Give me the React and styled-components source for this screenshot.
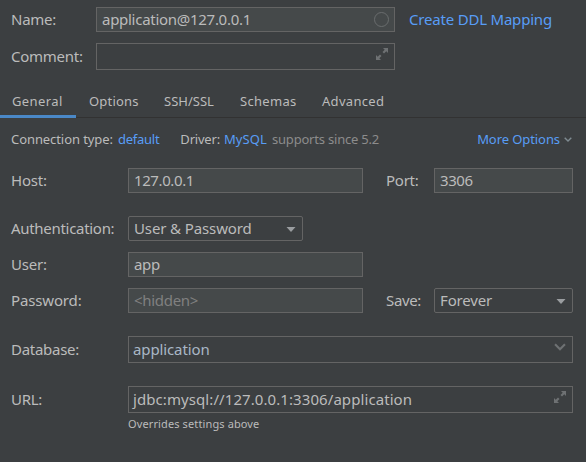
import React from "react";
import styled, { createGlobalStyle } from "styled-components";

const GlobalStyle = createGlobalStyle`
  *, *::before, *::after { box-sizing: border-box; }
  html, body { margin: 0; background: #3c3f41; }
`;

const Dialog = styled.main`
  width: 586px;
  height: 462px;
  overflow: hidden;
  background: #3c3f41;
  color: #bbbbbb;
  font: 15px/20px "Noto Sans", sans-serif;
  white-space: nowrap;
`;

const Text = styled.span`
  letter-spacing: ${(p) => p.$track || 0}px;
`;

const Header = styled.header`
  display: grid;
  grid-template-columns: 85px 299px auto;
  grid-template-rows: 25px 27px;
  row-gap: 11px;
  padding: 7px 0 0 11px;
  align-items: center;
`;

const Link = styled(Text)`
  color: #589df6;
  margin-left: ${(p) => p.$gap || 0}px;
  padding-bottom: ${(p) => p.$lift || 0}px;
`;

const Label = styled.label`
  padding: 0 0 2px ${(p) => p.$inset || 0}px;
  letter-spacing: ${(p) => p.$track || 0}px;
`;

const Field = styled.div`
  display: flex;
  align-items: center;
  justify-content: space-between;
  height: ${(p) => (p.$tall ? 27 : 25)}px;
  width: ${(p) => (p.$width ? `${p.$width}px` : "100%")};
  padding: 0 5px 0 ${(p) => (p.$tall ? 4 : 5)}px;
  border: 1px solid #646464;
  border-radius: ${(p) => (p.$select ? 2 : 0)}px;
  background: ${(p) => (p.$filled ? "#45494a" : "#3c3f41")};
  color: ${(p) => (p.$muted ? "#808080" : p.$code ? "#a9b7c6" : "#bbbbbb")};
`;

const Value = styled(Text)`
  padding-bottom: 2px;
`;

const Tabs = styled.nav`
  display: flex;
  height: 33px;
  margin-top: 15px;
  border-bottom: 1px solid #323232;
`;

const Tab = styled.span`
  height: 33px;
  width: ${(p) => p.$width}px;
  padding: 6px 0 0 ${(p) => (p.$active ? 12 : 13)}px;
  border-bottom: ${(p) => (p.$active ? "3px solid #4a88c7" : "0")};
  font-size: 13px;
  line-height: 20px;
  letter-spacing: ${(p) => p.$track || 0}px;
`;

const Summary = styled.div`
  display: flex;
  align-items: center;
  height: 18px;
  margin: 12px 14px 0 11px;
  font-size: 13px;
  line-height: 18px;
`;

const Driver = styled(Text)`
  margin-left: 21px;
`;

const Note = styled(Text)`
  margin-left: 5px;
  color: #8c8c8c;
`;

const MoreOptions = styled.span`
  display: flex;
  align-items: center;
  gap: 4px;
  margin-left: auto;
`;

const Form = styled.section`
  padding: 20px 13px 0 11px;
`;

const Row = styled.div`
  display: grid;
  grid-template-columns: 117px ${(p) => (p.$wide ? "445px" : "235px 71px 139px")};
  align-items: center;
  margin-bottom: ${(p) => p.$after}px;
`;

const Hint = styled.p`
  margin: 3px 0 0 117px;
  font-size: 11px;
  line-height: 16px;
  letter-spacing: 0.12px;
`;

const Icon = styled.svg`
  display: block;
  flex: none;
  margin-top: ${(p) => p.$raise || 0}px;
  margin-right: ${(p) => p.$right || 0}px;
`;

function ExpandIcon() {
  return (
    <Icon width="12" height="12" viewBox="0 0 12 12" $raise={-5} $right={1}>
      <path
        d="M7 0h5v5l-1.700-1.700L8 5.500 6.500 4l2.200-2.300zM0 7l1.700 1.700L4 6.500 5.500 8l-2.200 2.300L5 12H0z"
        fill="#6e7173"
      />
    </Icon>
  );
}

function Chevron({ width = 8, height = 5, color = "#7f8b91", raise, right }) {
  return (
    <Icon width={width} height={height} viewBox="0 0 8 5" $raise={raise} $right={right}>
      <path d="M.7.7 4 4 7.300.7" fill="none" stroke={color} strokeWidth="1.400" />
    </Icon>
  );
}

function SelectArrow() {
  return (
    <Icon width="10" height="5" viewBox="0 0 10 5" $raise={2} $right={1}>
      <path d="M.5 0h9L5 5z" fill="#9a9da0" />
    </Icon>
  );
}

export default function App() {
  return (
    <Dialog>
      <GlobalStyle />
      <Header>
        <Label $track={-0.25}>Name:</Label>
        <Field $filled>
          <Value $track={-0.28}>application@127.0.0.1</Value>
          <Icon width="15" height="15" viewBox="0 0 15 15">
            <circle cx="7.500" cy="7.500" r="7" fill="none" stroke="#6a6d6e" />
          </Icon>
        </Field>
        <Link $gap={14} $lift={2} $track={-0.2}>Create DDL Mapping</Link>
        <Label $track={-0.25}>Comment:</Label>
        <Field $tall><span /><ExpandIcon /></Field>
      </Header>
      <Tabs>
        <Tab $active $width={76} $track={0.4}>General</Tab>
        <Tab $width={75} $track={0.2}>Options</Tab>
        <Tab $width={76}>SSH/SSL</Tab>
        <Tab $width={82} $track={0.3}>Schemas</Tab>
        <Tab $width={88} $track={0.3}>Advanced</Tab>
      </Tabs>
      <Summary>
        <Text $track={-0.08}>Connection type:</Text>
        <Link $gap={5} $track={-0.25}>default</Link>
        <Driver $track={-0.2}>Driver:</Driver>
        <Link $gap={4} $track={0.1}>MySQL</Link>
        <Note $track={-0.2}>supports since 5.2</Note>
        <MoreOptions><Link $track={-0.08}>More Options</Link><Chevron /></MoreOptions>
      </Summary>
      <Form>
        <Row $after={23}>
          <Label $track={-0.2}>Host:</Label>
          <Field $filled><Value $track={-0.4}>127.0.0.1</Value></Field>
          <Label $inset={23} $track={-0.25}>Port:</Label>
          <Field $filled><Value $track={-0.4}>3306</Value></Field>
        </Row>
        <Row $after={11}>
          <Label $track={-0.3}>Authentication:</Label>
          <Field $select $width={175}><Value $track={-0.12}>User &amp; Password</Value><SelectArrow /></Field>
        </Row>
        <Row $after={11}>
          <Label $track={-0.2}>User:</Label>
          <Field $filled><Value $track={-0.3}>app</Value></Field>
        </Row>
        <Row $after={23}>
          <Label $track={-0.15}>Password:</Label>
          <Field $filled $muted><Value $track={-0.3}>&lt;hidden&gt;</Value></Field>
          <Label $inset={23} $track={-0.35}>Save:</Label>
          <Field $select><Value $track={-0.15}>Forever</Value><SelectArrow /></Field>
        </Row>
        <Row $wide $after={23}>
          <Label $track={-0.28}>Database:</Label>
          <Field $tall $code>
            <Value $track={-0.12}>application</Value>
            <Chevron width={12} height={8} color="#6e7173" raise={-5} right={1} />
          </Field>
        </Row>
        <Row $wide $after={0}>
          <Label $track={-0.3}>URL:</Label>
          <Field $tall>
            <Value $track={0.08}>jdbc:mysql://127.0.0.1:3306/application</Value>
            <ExpandIcon />
          </Field>
        </Row>
        <Hint>Overrides settings above</Hint>
      </Form>
    </Dialog>
  );
}
